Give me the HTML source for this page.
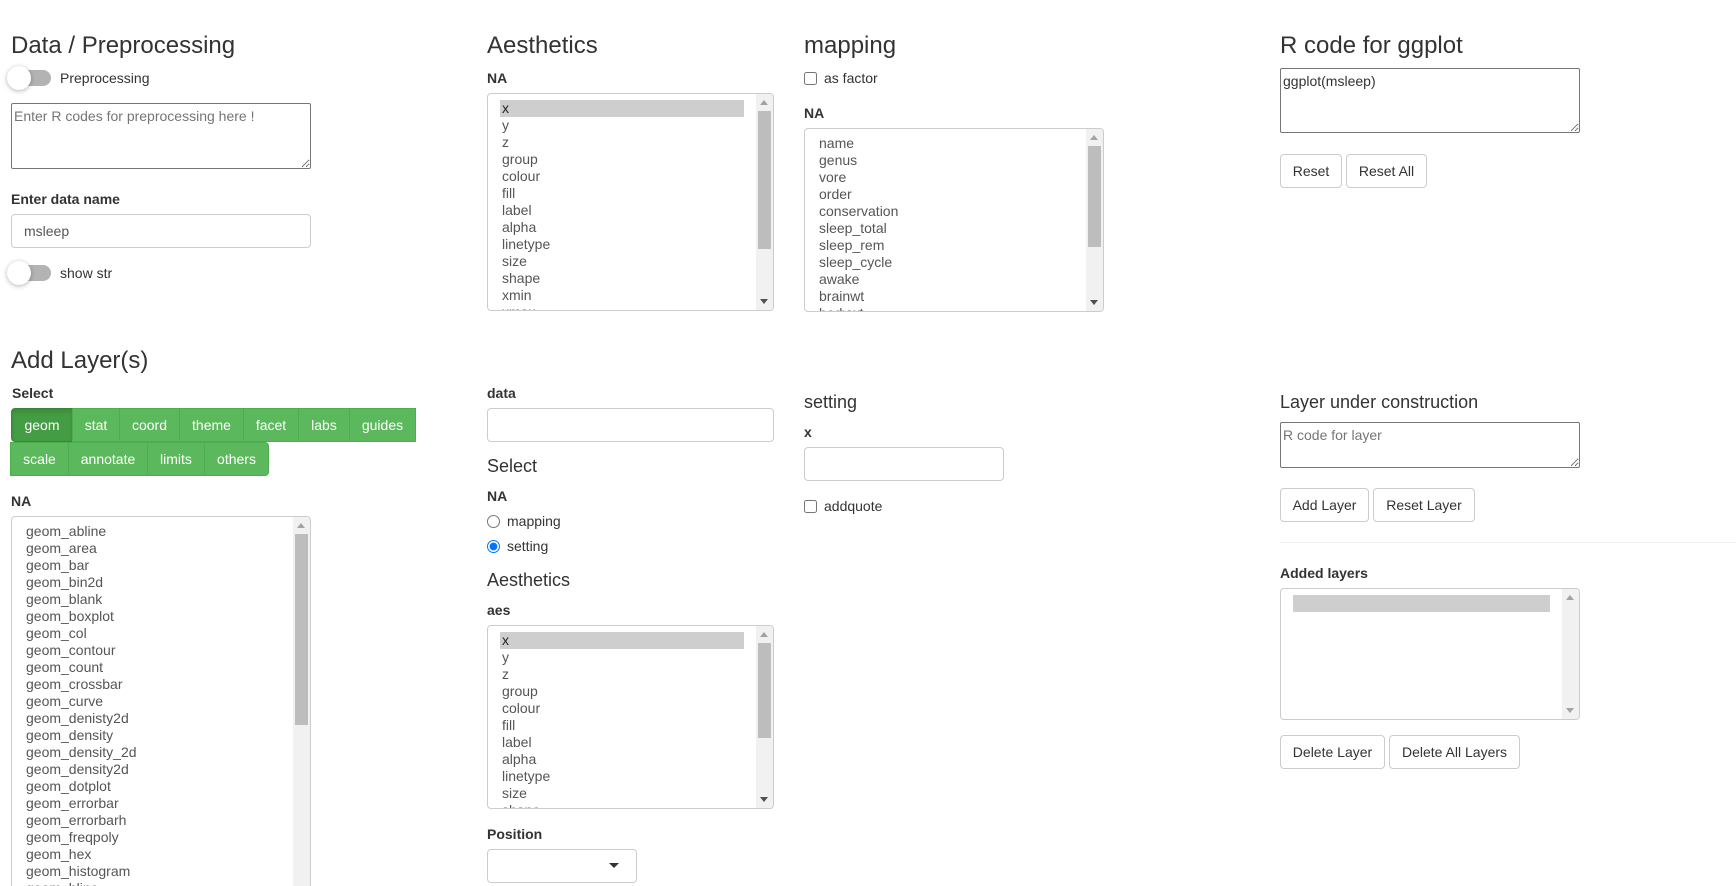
<!DOCTYPE html>
<html lang="en">
<head>
<meta charset="utf-8">
<title>ggplot builder</title>
<style>
*{box-sizing:border-box}
html,body{margin:0;padding:0;background:#fff;width:1736px;height:886px;overflow:hidden}
body{position:relative;font-family:"Liberation Sans",Arial,sans-serif;font-size:14px;line-height:20px;color:#333}
.a{position:absolute;white-space:nowrap}
h3.a{margin:0;font-size:24px;font-weight:400;line-height:26px}
h4.a{margin:0;font-size:18px;font-weight:400;line-height:20px}
.l{font-weight:700}
textarea.a{margin:0;padding:2px;font:14px/20px "Liberation Sans",Arial,sans-serif;color:#333;border:1px solid #767676;border-radius:2px;background:#fff;outline:0;white-space:pre-wrap}
textarea::placeholder{color:#757575;opacity:1}
.in{border:1px solid #ccc;border-radius:4px;background:#fff;height:34px;padding:6px 12px;color:#555}
.btn{position:absolute;height:34px;border:1px solid #ccc;border-radius:4px;background:#fff;color:#333;font:14px/20px "Liberation Sans",Arial,sans-serif;padding:0;text-align:center;white-space:nowrap}
.g{position:absolute;height:34px;background:#5cb85c;border:1px solid #4cae4c;color:#fff;font-size:14px;line-height:32px;text-align:center;white-space:nowrap}
.g.on{background:#449d44;border-color:#398439;box-shadow:inset 0 3px 5px rgba(0,0,0,.125)}
.sel{position:absolute;border:1px solid #ccc;border-radius:4px;background:#fff;overflow:hidden;color:#555;padding:6px 29px 6px 12px;font-size:14px;line-height:16px}
.sel .o{height:17px;padding:0 2px;white-space:nowrap;line-height:17px}
.sel .o.s{background:#cecece;color:#222}
.sb{position:absolute;right:0;top:0;bottom:0;width:17px;background:#f1f1f1}
.sb i{position:absolute;left:2px;width:13px;background:#bdbdbd;display:block}
.sb b{position:absolute;left:4px;width:0;height:0;border-left:4.5px solid transparent;border-right:4.5px solid transparent}
.up{top:6px;border-bottom:5px solid #a3a3a3}
.dn{border-top:5px solid #505050}
.dn.off{border-top-color:#a3a3a3}
.sw{position:absolute;width:40px;height:16px;border-radius:8px;background:#b3b3b3}
.kn{position:absolute;width:24px;height:24px;border-radius:50%;background:#fff;box-shadow:0 1px 5px rgba(0,0,0,.3)}
input[type=checkbox].a,input[type=radio].a{margin:0;width:13px;height:13px}
</style>
</head>
<body>

<!-- Column 1: data -->
<h3 class="a" style="left:11px;top:33px">Data / Preprocessing</h3>
<div class="sw" style="left:11px;top:70px"></div><div class="kn" style="left:7px;top:66px"></div>
<div class="a" style="left:60px;top:68px">Preprocessing</div>
<textarea class="a" style="left:11px;top:103px;width:300px;height:66px" placeholder="Enter R codes for preprocessing here !"></textarea>
<div class="a l" style="left:11px;top:189px">Enter data name</div>
<div class="a in" style="left:11px;top:214px;width:300px">msleep</div>
<div class="sw" style="left:11px;top:265px"></div><div class="kn" style="left:7px;top:261px"></div>
<div class="a" style="left:60px;top:263px">show str</div>

<!-- Column 2: aesthetics -->
<h3 class="a" style="left:487px;top:33px">Aesthetics</h3>
<div class="a l" style="left:487px;top:68px">NA</div>
<div class="sel" style="left:487px;top:93px;width:287px;height:218px">
<div class="o s">x</div><div class="o">y</div><div class="o">z</div><div class="o">group</div><div class="o">colour</div><div class="o">fill</div><div class="o">label</div><div class="o">alpha</div><div class="o">linetype</div><div class="o">size</div><div class="o">shape</div><div class="o">xmin</div><div class="o">xmax</div>
<div class="sb"><b class="up"></b><i style="top:17px;height:138px"></i><b class="dn" style="bottom:6px"></b></div>
</div>

<!-- Column 3: mapping -->
<h3 class="a" style="left:804px;top:33px">mapping</h3>
<input class="a" type="checkbox" style="left:804px;top:72px">
<div class="a" style="left:824px;top:68px">as factor</div>
<div class="a l" style="left:804px;top:103px">NA</div>
<div class="sel" style="left:804px;top:128px;width:300px;height:184px">
<div class="o">name</div><div class="o">genus</div><div class="o">vore</div><div class="o">order</div><div class="o">conservation</div><div class="o">sleep_total</div><div class="o">sleep_rem</div><div class="o">sleep_cycle</div><div class="o">awake</div><div class="o">brainwt</div><div class="o">bodywt</div>
<div class="sb"><b class="up"></b><i style="top:17px;height:101px"></i><b class="dn" style="bottom:6px"></b></div>
</div>

<!-- Column 4: R code -->
<h3 class="a" style="left:1280px;top:33px">R code for ggplot</h3>
<textarea class="a" style="left:1280px;top:68px;width:300px;height:65px">ggplot(msleep)</textarea>
<button class="btn" style="left:1280px;top:154px;width:62px">Reset</button>
<button class="btn" style="left:1346px;top:154px;width:81px">Reset All</button>

<!-- Add layers -->
<h3 class="a" style="left:11px;top:348px">Add Layer(s)</h3>
<div class="a l" style="left:12px;top:383px">Select</div>
<div class="g on" style="left:11px;top:408px;width:62px;border-radius:4px 0 0 4px">geom</div>
<div class="g" style="left:72px;top:408px;width:48px">stat</div>
<div class="g" style="left:119px;top:408px;width:61px">coord</div>
<div class="g" style="left:179px;top:408px;width:65px">theme</div>
<div class="g" style="left:243px;top:408px;width:56px">facet</div>
<div class="g" style="left:298px;top:408px;width:52px">labs</div>
<div class="g" style="left:349px;top:408px;width:67px">guides</div>
<div class="g" style="left:10px;top:442px;width:59px">scale</div>
<div class="g" style="left:68px;top:442px;width:80px">annotate</div>
<div class="g" style="left:147px;top:442px;width:58px">limits</div>
<div class="g" style="left:204px;top:442px;width:65px;border-radius:0 4px 4px 0">others</div>
<div class="a l" style="left:11px;top:491px">NA</div>
<div class="sel" style="left:11px;top:516px;width:300px;height:400px">
<div class="o">geom_abline</div><div class="o">geom_area</div><div class="o">geom_bar</div><div class="o">geom_bin2d</div><div class="o">geom_blank</div><div class="o">geom_boxplot</div><div class="o">geom_col</div><div class="o">geom_contour</div><div class="o">geom_count</div><div class="o">geom_crossbar</div><div class="o">geom_curve</div><div class="o">geom_denisty2d</div><div class="o">geom_density</div><div class="o">geom_density_2d</div><div class="o">geom_density2d</div><div class="o">geom_dotplot</div><div class="o">geom_errorbar</div><div class="o">geom_errorbarh</div><div class="o">geom_freqpoly</div><div class="o">geom_hex</div><div class="o">geom_histogram</div><div class="o">geom_hline</div>
<div class="sb"><b class="up"></b><i style="top:17px;height:191px"></i></div>
</div>

<!-- Middle column -->
<div class="a l" style="left:487px;top:383px">data</div>
<div class="a in" style="left:487px;top:408px;width:287px"></div>
<h4 class="a" style="left:487px;top:456px">Select</h4>
<div class="a l" style="left:487px;top:486px">NA</div>
<input class="a" type="radio" name="m" style="left:487px;top:515px">
<div class="a" style="left:507px;top:511px">mapping</div>
<input class="a" type="radio" name="m" checked style="left:487px;top:540px">
<div class="a" style="left:507px;top:536px">setting</div>
<h4 class="a" style="left:487px;top:570px">Aesthetics</h4>
<div class="a l" style="left:487px;top:600px">aes</div>
<div class="sel" style="left:487px;top:625px;width:287px;height:184px">
<div class="o s">x</div><div class="o">y</div><div class="o">z</div><div class="o">group</div><div class="o">colour</div><div class="o">fill</div><div class="o">label</div><div class="o">alpha</div><div class="o">linetype</div><div class="o">size</div><div class="o">shape</div>
<div class="sb"><b class="up"></b><i style="top:17px;height:95px"></i><b class="dn" style="bottom:6px"></b></div>
</div>
<div class="a l" style="left:487px;top:824px">Position</div>
<div class="a in" style="left:487px;top:849px;width:150px"></div>
<div class="a" style="left:609px;top:863px;width:0;height:0;border-left:5px solid transparent;border-right:5px solid transparent;border-top:5px solid #333"></div>

<!-- Setting column -->
<h4 class="a" style="left:804px;top:392px">setting</h4>
<div class="a l" style="left:804px;top:422px">x</div>
<div class="a in" style="left:804px;top:447px;width:200px"></div>
<input class="a" type="checkbox" style="left:804px;top:500px">
<div class="a" style="left:824px;top:496px">addquote</div>

<!-- Layer under construction -->
<h4 class="a" style="left:1280px;top:392px">Layer under construction</h4>
<textarea class="a" style="left:1280px;top:422px;width:300px;height:46px" placeholder="R code for layer"></textarea>
<button class="btn" style="left:1280px;top:488px;width:89px">Add Layer</button>
<button class="btn" style="left:1373px;top:488px;width:102px">Reset Layer</button>
<div class="a" style="left:1280px;top:542px;width:456px;height:1px;background:#eee"></div>
<div class="a l" style="left:1280px;top:563px">Added layers</div>
<div class="sel" style="left:1280px;top:588px;width:300px;height:132px">
<div class="o s">&nbsp;</div>
<div class="sb"><b class="up"></b><b class="dn off" style="bottom:6px"></b></div>
</div>
<button class="btn" style="left:1280px;top:735px;width:105px">Delete Layer</button>
<button class="btn" style="left:1389px;top:735px;width:131px">Delete All Layers</button>

</body>
</html>
